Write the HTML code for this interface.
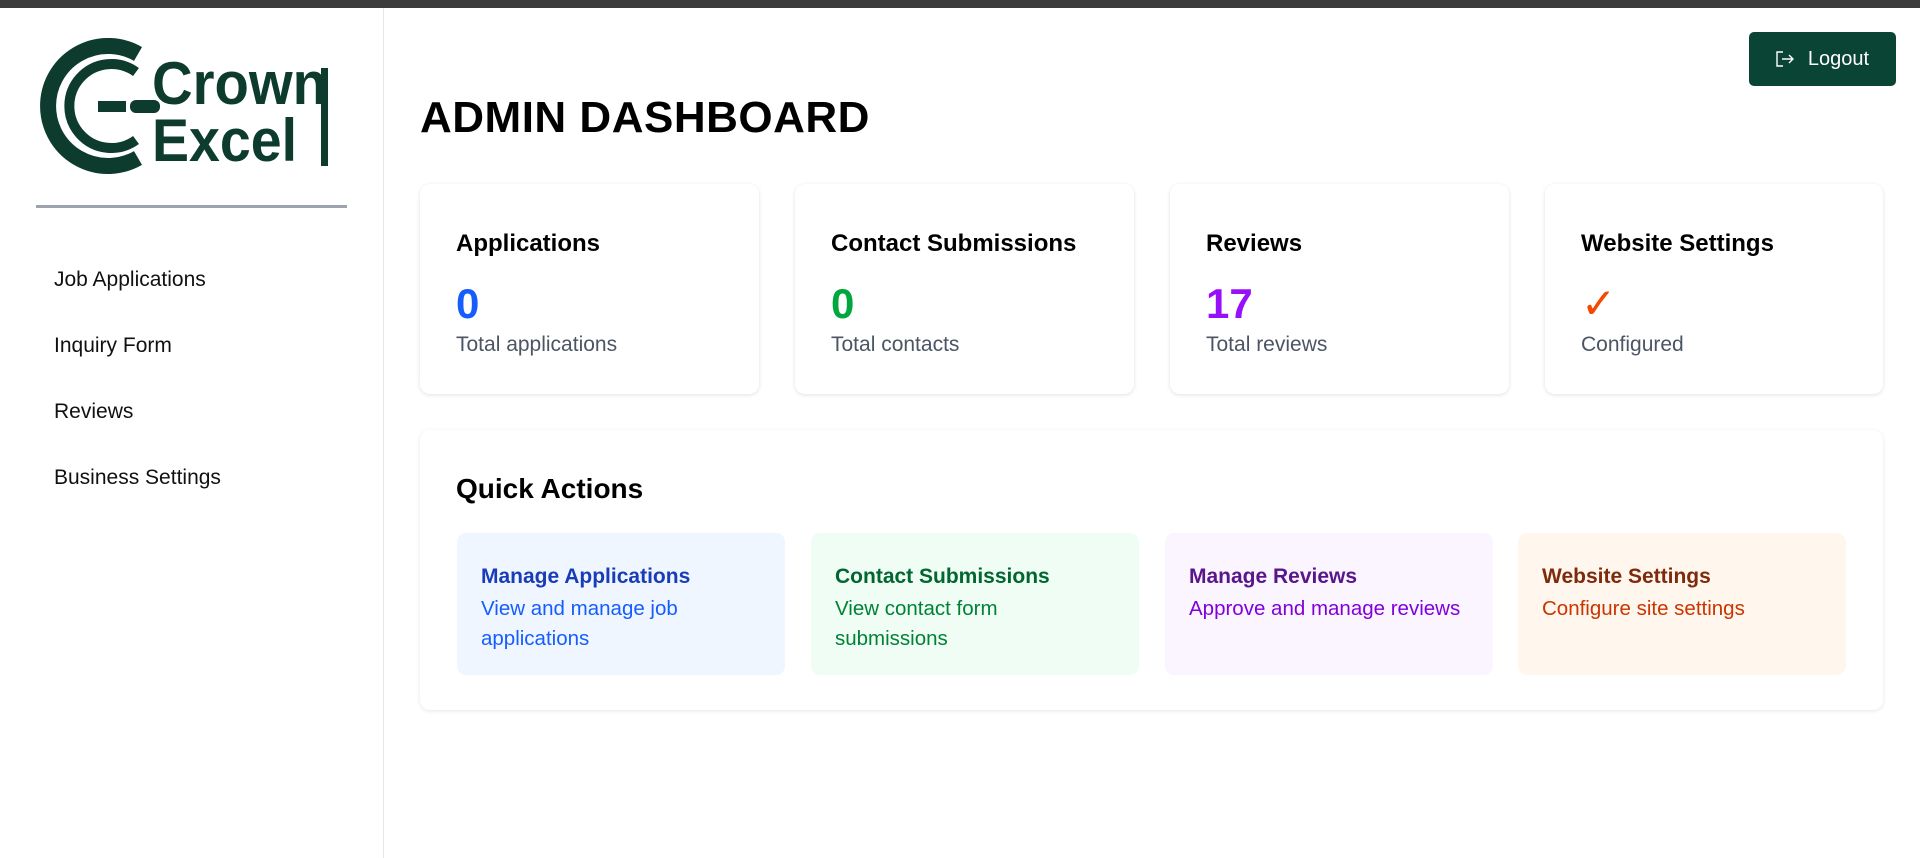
<!DOCTYPE html>
<html><head><meta charset="utf-8"><style>
*{box-sizing:border-box;margin:0;padding:0}
body{width:1920px;height:858px;overflow:hidden;background:#fff;font-family:"Liberation Sans",sans-serif;position:relative}
.top{position:absolute;left:0;top:0;width:1920px;height:8px;background:#3c3c3c}
.side{position:absolute;left:0;top:8px;width:384px;height:850px;border-right:1px solid #e5e7eb}
.div{position:absolute;left:36px;top:197px;width:311px;height:3px;background:#9ca3af}
.nav{position:absolute;left:54px;font-size:21px;color:#111}
.logout{position:absolute;left:1749px;top:32px;width:147px;height:54px;background:#0a4434;border-radius:5px;color:#fff;font-size:20px;display:flex;align-items:center;justify-content:center;gap:14px}
h1{position:absolute;left:420px;top:93px;font-size:44px;font-weight:bold;color:#000;letter-spacing:0.5px}
.card{position:absolute;top:184px;width:339px;height:210px;background:#fff;border-radius:10px;box-shadow:0 1px 4px rgba(0,0,0,0.12);padding:0 36px}
.card h3{font-size:24px;font-weight:bold;margin-top:46px;color:#000}
.card .n{font-size:42px;font-weight:bold;margin-top:22px;line-height:48px}
.card .s{font-size:21px;color:#4b5563;margin-top:5px}
.panel{position:absolute;left:420px;top:430px;width:1463px;height:280px;border-radius:10px;box-shadow:0 1px 4px rgba(0,0,0,0.1)}
.panel h2{position:absolute;left:36px;top:43px;font-size:28px;font-weight:bold;color:#000}
.act{position:absolute;top:103px;width:328px;height:142px;border-radius:9px;padding:32px 24px}
.act b{display:block;font-size:21px;margin-bottom:5px}
.act p{font-size:20.5px;line-height:30px}
</style></head><body>
<div class="top"></div>
<div class="side">
<svg style="position:absolute;left:30px;top:30px" width="320" height="140" viewBox="0 0 320 140">
<path d="M108 16 A60 60 0 1 0 108 120" fill="none" stroke="#0d3b2e" stroke-width="16"/>
<path d="M106 34 A42 42 0 1 0 106 102" fill="none" stroke="#0d3b2e" stroke-width="10"/>
<rect x="68" y="63" width="28" height="11" fill="#0d3b2e"/>
<rect x="100" y="62" width="30" height="13" rx="6" fill="#0d3b2e"/>
<text x="122" y="66" font-family="Liberation Sans" font-weight="bold" font-size="60" fill="#0d3b2e" textLength="175" lengthAdjust="spacingAndGlyphs">Crown</text>
<text x="122" y="123" font-family="Liberation Sans" font-weight="bold" font-size="60" fill="#0d3b2e" textLength="145" lengthAdjust="spacingAndGlyphs">Excel</text>
<rect x="291" y="30" width="7" height="98" fill="#0d3b2e"/>
</svg>
<div class="div"></div>
<div class="nav" style="top:260px">Job Applications</div>
<div class="nav" style="top:326px">Inquiry Form</div>
<div class="nav" style="top:392px">Reviews</div>
<div class="nav" style="top:458px">Business Settings</div>
</div>
<div class="logout"><svg width="18" height="16" viewBox="0 0 18 16" fill="none" stroke="#fff" stroke-width="1.4"><path d="M7 1H1v14h6M6 8h11M13 4l4 4-4 4"/></svg>Logout</div>
<h1>ADMIN DASHBOARD</h1>
<div class="card" style="left:420px"><h3>Applications</h3><div class="n" style="color:#155dfc">0</div><div class="s">Total applications</div></div>
<div class="card" style="left:795px"><h3>Contact Submissions</h3><div class="n" style="color:#00a63e">0</div><div class="s">Total contacts</div></div>
<div class="card" style="left:1170px"><h3>Reviews</h3><div class="n" style="color:#9810fa">17</div><div class="s">Total reviews</div></div>
<div class="card" style="left:1545px;width:338px"><h3>Website Settings</h3><div class="n" style="color:#f54900;font-weight:normal">✓</div><div class="s">Configured</div></div>
<div class="panel"><h2>Quick Actions</h2>
<div class="act" style="left:37px;background:#eff6ff"><b style="color:#193cb8">Manage Applications</b><p style="color:#155dfc">View and manage job applications</p></div>
<div class="act" style="left:391px;background:#f0fdf4"><b style="color:#016630">Contact Submissions</b><p style="color:#008236">View contact form submissions</p></div>
<div class="act" style="left:745px;background:#faf5ff"><b style="color:#59168b">Manage Reviews</b><p style="color:#8200db">Approve and manage reviews</p></div>
<div class="act" style="left:1098px;background:#fff7ed"><b style="color:#7e2a0c">Website Settings</b><p style="color:#ca3500">Configure site settings</p></div>
</div>
</body></html>
